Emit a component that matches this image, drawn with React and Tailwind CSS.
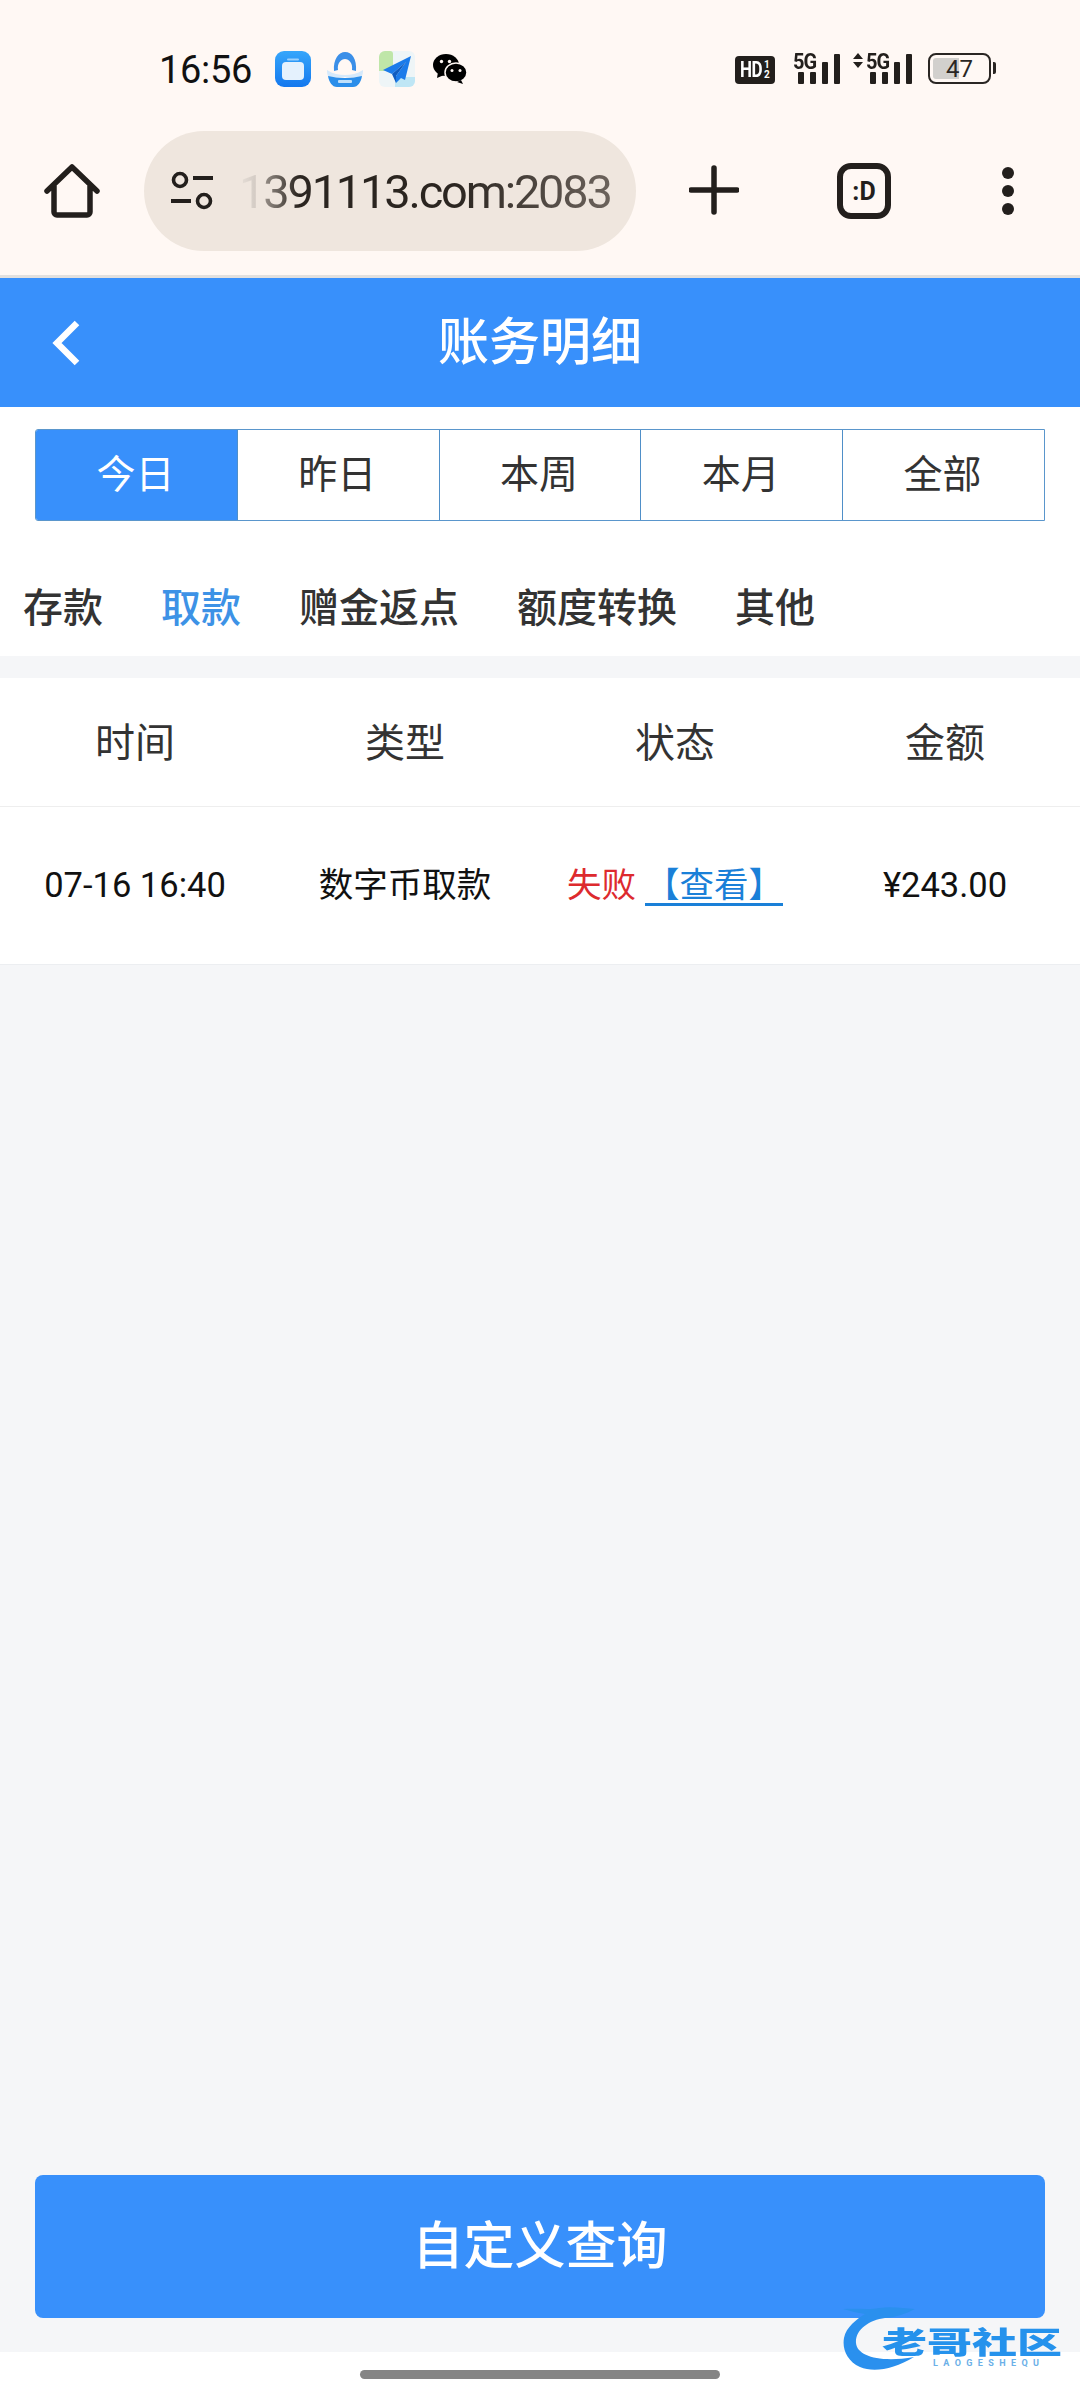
const FONT = "font-['Roboto','Noto_Sans_CJK_SC',sans-serif]";

function FilesIcon() {
  return (
    <svg width="36" height="36" viewBox="0 0 36 36" className="shrink-0">
      <defs>
        <linearGradient id="fi" x1="0" y1="0" x2="0" y2="1">
          <stop offset="0" stopColor="#36a6fb" />
          <stop offset="1" stopColor="#1478ee" />
        </linearGradient>
      </defs>
      <rect width="36" height="36" rx="9" fill="url(#fi)" />
      <rect x="12" y="7.500" width="12" height="2" rx="1" fill="#9cd0fb" />
      <rect x="7" y="11" width="22" height="18" rx="4" fill="#e4f1fd" />
    </svg>
  );
}

function CloudIcon() {
  return (
    <svg width="36" height="36" viewBox="0 0 36 36" className="shrink-0">
      <path d="M7 20C6 8 12 1 18 1c7 0 12 7 11 19l-4-1c1-7-3-11-7-11s-8 4-7 11z" fill="#3b8fe8" />
      <path d="M0 19c6 4 12 5 18 5s12-1 18-5c0 5-1 6-2 7H2c-1-1-2-2-2-7z" fill="#d5e9fb" />
      <path d="M1 25c5 1 11 2 17 2s12-1 17-2c-1 6-4 11-9 11H10C5 36 2 31 1 25z" fill="#2b8eea" />
      <rect x="11" y="29" width="14" height="3" rx="1" fill="#bfe0fb" />
    </svg>
  );
}

function PlaneIcon() {
  return (
    <svg width="36" height="36" viewBox="0 0 36 36" className="shrink-0">
      <rect width="36" height="36" rx="6" fill="#eef5f7" />
      <path d="M0 6a6 6 0 0 1 6-6h5a3 3 0 0 1 3 3v14a3 3 0 0 1-3 3H0z" fill="#bfe6a8" />
      <path d="M20 26h16v4a6 6 0 0 1-6 6H16v-6a4 4 0 0 1 4-4z" fill="#bfe6f5" />
      <path d="M32 5 4 19l9 4 14-12-10 14v7l5-5 4 2z" fill="#1b7bea" />
      <path d="M13 23 17 32v-7l10-14z" fill="#0f5cc0" />
    </svg>
  );
}

function WechatIcon() {
  return (
    <svg width="34" height="30" viewBox="0 0 34 30" className="shrink-0">
      <ellipse cx="13" cy="11" rx="13" ry="11" fill="#000" />
      <path d="M5 18l-1 6 7-3z" fill="#000" />
      <ellipse cx="23" cy="18.500" rx="11" ry="9.500" fill="#000" stroke="#fff8f4" strokeWidth="1.500" />
      <path d="M28 26l2 4-6-2z" fill="#000" />
      <circle cx="8.500" cy="7.500" r="1.700" fill="#fff8f4" />
      <circle cx="16.500" cy="7.500" r="1.700" fill="#fff8f4" />
      <circle cx="19" cy="16.500" r="1.500" fill="#fff8f4" />
      <circle cx="27" cy="16.500" r="1.500" fill="#fff8f4" />
    </svg>
  );
}

function Bars() {
  return (
    <>
      <span className="w-[6px] h-[12px] bg-[#231f1c] rounded-[1px]" />
      <span className="w-[6px] h-[12px] bg-[#231f1c] rounded-[1px]" />
      <span className="w-[6px] h-[22px] bg-[#231f1c] rounded-[1px]" />
      <span className="w-[6px] h-[30px] bg-[#231f1c] rounded-[1px]" />
    </>
  );
}

function StatusBar() {
  return (
    <div className="h-[131px] flex items-start pt-[51px] pl-[159px]">
      <span className="text-[38px] leading-[36px] text-[#111] w-[116px] mt-[1px] tracking-[-0.3px]">16:56</span>
      <div className="flex items-center h-[36px]">
        <FilesIcon />
        <span className="w-[16px]" />
        <CloudIcon />
        <span className="w-[16px]" />
        <PlaneIcon />
        <span className="w-[18px]" />
        <WechatIcon />
      </div>
      <div className="ml-[268px] flex items-start h-[36px]">
        <span className="mt-[5px] w-[40px] h-[28px] bg-[#231f1c] rounded-[4px] flex items-center pl-[5px] text-white font-bold text-[17px] leading-none tracking-[-0.5px]">
          <span className="scale-y-125">HD</span>
          <span className="text-[10px] leading-[10px] flex flex-col items-center ml-[2px] tracking-normal">
            <span>1</span>
            <span>2</span>
          </span>
        </span>
        <span className="ml-[18px] relative block h-[33px] w-[47px]">
          <span className="absolute left-0 top-[1px] text-[20px] leading-[16px] font-bold text-[#231f1c] tracking-[-1px] scale-y-110 origin-top">5G</span>
          <span className="absolute left-[4.500px] bottom-0 flex items-end gap-[6px]">
            <Bars />
          </span>
        </span>
        <span className="ml-[13px] relative block h-[33px] w-[59px]">
          <svg width="10" height="15" viewBox="0 0 10 15" className="absolute left-0 top-[2px]">
            <path d="M5 0l5 6H0zM0 9h10l-5 6z" fill="#231f1c" />
          </svg>
          <span className="absolute left-[13px] top-[1px] text-[20px] leading-[16px] font-bold text-[#231f1c] tracking-[-1px] scale-y-110 origin-top">5G</span>
          <span className="absolute left-[17px] bottom-0 flex items-end gap-[6px]">
            <Bars />
          </span>
        </span>
        <span className="ml-[16px] mt-[2px] relative w-[63px] h-[31px] border-2 border-[#2a2623] rounded-[8px] flex items-center justify-center overflow-hidden">
          <span className="absolute left-[3px] top-[3px] bottom-[3px] w-[26px] bg-[#d2d0cd] rounded-l-[3px]" />
          <span className="relative text-[24px] leading-none text-[#2a2623]">47</span>
        </span>
        <span className="ml-[2px] mt-[11px] w-[3px] h-[12px] bg-[#2a2623] rounded-r-[2px]" />
      </div>
    </div>
  );
}

function Toolbar() {
  return (
    <div className="h-[144px] flex items-start">
      <svg width="56" height="56" viewBox="0 0 56 56" className="ml-[44px] mt-[32px] shrink-0">
        <path
          d="M3 28 28 4l25 24M10 23v26a3 3 0 0 0 3 3h30a3 3 0 0 0 3-3V23"
          fill="none"
          stroke="#231f1c"
          strokeWidth="5.500"
          strokeLinecap="round"
          strokeLinejoin="round"
        />
      </svg>
      <div className="ml-[44px] w-[492px] h-[120px] rounded-[60px] bg-[#efe6de] flex items-center overflow-hidden shrink-0">
        <svg width="46" height="40" viewBox="0 0 46 40" className="ml-[25px] shrink-0">
          <circle cx="11" cy="9" r="6.500" fill="none" stroke="#231f1c" strokeWidth="3.600" />
          <path d="M24 7h20M2 30h20" stroke="#231f1c" strokeWidth="3.800" />
          <circle cx="35" cy="30" r="6.500" fill="none" stroke="#231f1c" strokeWidth="3.600" />
        </svg>
        <span className="ml-[24px] text-[47px] leading-none whitespace-nowrap text-transparent bg-clip-text bg-[linear-gradient(90deg,#e8e0d9_0px,#d4ccc5_16px,#8e867f_28px,#2b2520_60px,#2b2520_215px,#6b625b_370px)] tracking-[-2.200px]">
          1391113.com:2083
        </span>
      </div>
      <svg width="50" height="50" viewBox="0 0 50 50" className="ml-[53px] mt-[34px] shrink-0">
        <path d="M25 3v44M2 25h46" stroke="#231f1c" strokeWidth="5.500" strokeLinecap="round" />
      </svg>
      <div className="ml-[98px] mt-[32px] w-[54px] h-[56px] border-[6px] border-[#231f1c] rounded-[14px] flex items-center justify-center text-[25px] leading-none font-bold text-[#231f1c] shrink-0">
        :D
      </div>
      <div className="ml-[111px] mt-[36px] flex flex-col gap-[6.500px] shrink-0">
        <span className="w-[11.500px] h-[11.500px] rounded-full bg-[#231f1c]" />
        <span className="w-[11.500px] h-[11.500px] rounded-full bg-[#231f1c]" />
        <span className="w-[11.500px] h-[11.500px] rounded-full bg-[#231f1c]" />
      </div>
    </div>
  );
}

function Header() {
  return (
    <div className="relative h-[129px] bg-[#3890fb] flex items-center justify-center">
      <svg width="32" height="48" viewBox="0 0 32 48" className="absolute left-[50px] top-[41px]">
        <path d="M27 4 7 24l20 20" fill="none" stroke="#fff" strokeWidth="6.500" />
      </svg>
      <span className="text-[51px] leading-none font-medium text-white">账务明细</span>
    </div>
  );
}

function Tabs() {
  const items = ["今日", "昨日", "本周", "本月", "全部"];
  return (
    <div className="pt-[22px] px-[35px]">
      <div className="flex h-[92px] border border-[#5a96cc] rounded-l-[3px] overflow-hidden">
        {items.map((t, i) => (
          <div
            key={t}
            className={
              i === 0
                ? "flex-1 flex items-center justify-center pr-[2px] bg-[#3890fb] text-white text-[39px]"
                : "flex-1 flex items-center justify-center pr-[2px] border-l border-[#4f8fc8] text-[#333] text-[39px]"
            }
          >
            {t}
          </div>
        ))}
      </div>
    </div>
  );
}

function Categories() {
  const items = ["存款", "取款", "赠金返点", "额度转换", "其他"];
  return (
    <div className="flex gap-[58px] pl-[23px] pt-[65px] h-[135px]">
      {items.map((t, i) => (
        <span
          key={t}
          className={
            i === 1
              ? "text-[40px] leading-[46px] font-medium text-[#3d92e6]"
              : "text-[40px] leading-[46px] font-medium text-[#333]"
          }
        >
          {t}
        </span>
      ))}
    </div>
  );
}

function Table() {
  const cols = ["时间", "类型", "状态", "金额"];
  return (
    <div className="bg-white">
      <div className="grid grid-cols-4 h-[129px] items-center pt-[3px] border-b border-[#eeeeee] text-[40px] text-[#333] text-center">
        {cols.map((c) => (
          <div key={c}>{c}</div>
        ))}
      </div>
      <div className="grid grid-cols-4 h-[158px] items-center border-b border-[#eceef1] text-[34.500px] text-[#111] text-center">
        <div>07-16 16:40</div>
        <div>数字币取款</div>
        <div className="whitespace-nowrap">
          <span className="text-[#dd2a2e]">失败</span>
          <span className="ml-[9px] text-[#1a80d8] underline underline-offset-[6px] decoration-[3px]">【查看】</span>
        </div>
        <div>¥243.00</div>
      </div>
    </div>
  );
}

function Watermark() {
  return (
    <div className="absolute left-[843px] top-[2305px] w-[222px] h-[68px] pointer-events-none">
      <svg width="100" height="68" viewBox="0 0 100 68" className="absolute left-0 top-0">
        <path d="M0 4c14-1 26 1 36-1 12-2 24 0 36 1-10 5-18 8-30 9C26 15 12 25 13 38c1 13 24 20 58 14-20 12-40 16-54 10C4 56-1 44 1 33 3 22 14 14 22 9 14 8 8 6 0 4z" fill="#2a90ee" />
      </svg>
      <span className="absolute left-[39px] top-[21px] text-[30px] leading-[34px] font-black scale-x-150 origin-left whitespace-nowrap text-[#2592ec] tracking-[0px]">
        老哥社区
      </span>
      <span className="absolute left-[90px] top-[54px] text-[9px] leading-[9px] tracking-[5.400px] text-[#6bb0e8] font-bold whitespace-nowrap">
        LAOGESHEQU
      </span>
    </div>
  );
}

export default function App() {
  return (
    <div className={`relative w-[1080px] h-[2400px] flex flex-col bg-white overflow-hidden ${FONT}`}>
      <div className="bg-[#fff8f4] h-[275px] shrink-0">
        <StatusBar />
        <Toolbar />
      </div>
      <div className="h-[3px] bg-[#e2e0de] shrink-0" />
      <Header />
      <Tabs />
      <Categories />
      <div className="h-[22px] bg-[#f5f6f8] shrink-0" />
      <Table />
      <div className="flex-1 bg-[#f5f6f8] flex flex-col justify-end px-[35px] pb-[34px]">
        <div className="h-[143px] rounded-[8px] bg-[#3890fb] text-white text-[51px] font-medium flex items-center justify-center pt-[2px]">
          自定义查询
        </div>
      </div>
      <div className="h-[48px] bg-white flex items-start justify-center pt-[18px] shrink-0">
        <span className="w-[360px] h-[9px] rounded-full bg-[#858585]" />
      </div>
      <Watermark />
    </div>
  );
}
